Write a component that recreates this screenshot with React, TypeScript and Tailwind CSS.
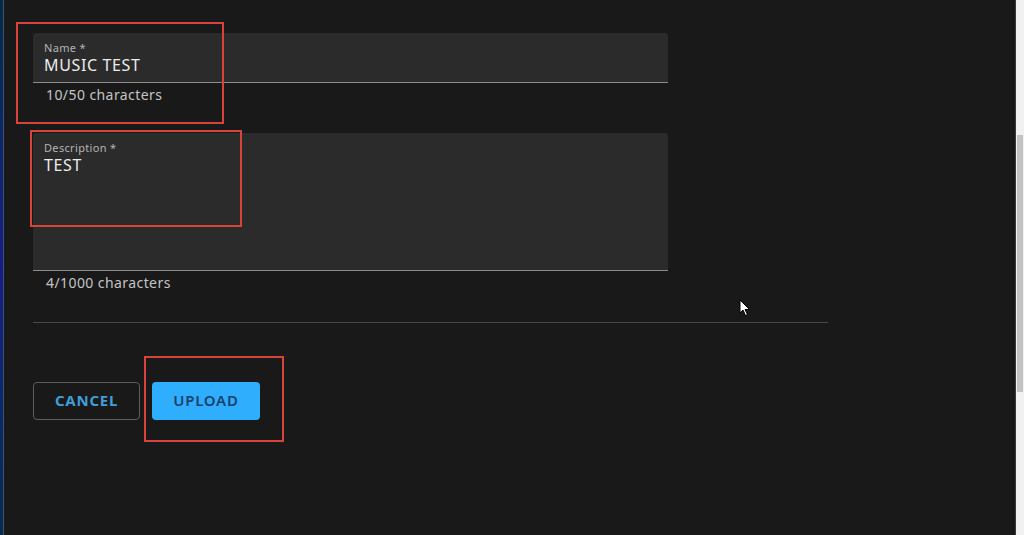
import React from "react"

const font = { fontFamily: '"Noto Sans", "Liberation Sans", sans-serif' }

function Field({ label, value, helper, tall }: { label: string; value: string; helper: string; tall?: boolean }) {
    return (
        <div className="w-[635px]">
            <div className={`bg-[#2b2b2b] border-b border-[#8c8c8c] px-[11px] pt-[8px] rounded-t-[3px] ${tall ? "h-[138px]" : "h-[50px]"}`}>
                <div className="text-[11px] leading-[14px] tracking-[0.03em] text-[#b4b4b4]">{label}</div>
                <div className="text-[16px] leading-[20px] tracking-[0.04em] text-[#ececec]">{value}</div>
            </div>
            <div className="text-[14px] leading-[16px] tracking-[0.03em] text-[#c4c4c4] pl-[13px] mt-[4px]">{helper}</div>
        </div>
    )
}

export default function App() {
    return (
        <div className="relative flex h-[535px] w-[1024px] overflow-hidden bg-[#191919]" style={font}>
            <div className="w-[4px] shrink-0 bg-gradient-to-b from-[#0d2740] via-[#1c1a86] to-[#0b2a48] border-r border-[#2a5a7a]" />

            <div className="flex-1 pl-[29px] pt-[33px]">
                <Field label="Name *" value="MUSIC TEST" helper="10/50 characters" />
                <div className="mt-[30px]">
                    <Field label="Description *" value="TEST" helper="4/1000 characters" tall />
                </div>
                <div className="mt-[31px] h-px w-[795px] bg-[#4a4a4a]" />
                <div className="mt-[59px] flex gap-[12px]">
                    <button className="h-[38px] w-[107px] rounded-[4px] border border-[#5c5c5c] pb-[3px] text-[15px] leading-[18px] font-bold tracking-[0.05em] text-[#3f9ed8]">
                        CANCEL
                    </button>
                    <button className="h-[38px] w-[108px] rounded-[4px] bg-[#2eaefc] pb-[3px] text-[15px] leading-[18px] font-semibold tracking-[0.05em] text-[#17416b]">
                        UPLOAD
                    </button>
                </div>
            </div>

            <div className="w-[9px] shrink-0 bg-[#f1f1f1] border-l border-[#3a3a3a]">
                <div className="mt-[135px] h-[257px] mx-[1px] bg-[#c2c2c2]" />
            </div>

            {/* annotation boxes */}
            <div className="absolute left-[16px] top-[22px] h-[102px] w-[208px] border-2 border-[#d8443b]" />
            <div className="absolute left-[30px] top-[130px] h-[97px] w-[212px] border-2 border-[#d8443b]" />
            <div className="absolute left-[144px] top-[356px] h-[86px] w-[140px] border-2 border-[#d8443b]" />

            {/* mouse cursor */}
            <svg className="absolute left-[739px] top-[299px]" width="12" height="18" viewBox="0 0 12 18">
                <path d="M1 1 L1 14 L4 11 L6.5 16.5 L8.5 15.5 L6 10.5 L10.5 10.5 Z" fill="#ffffff" stroke="#000" strokeWidth="1" />
            </svg>
        </div>
    )
}
